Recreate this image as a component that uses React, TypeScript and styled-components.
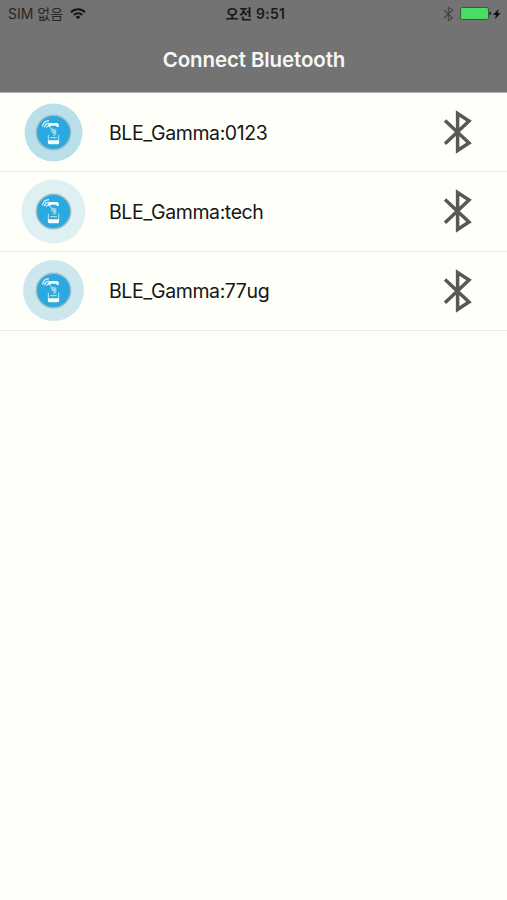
import React from "react";
import styled, { createGlobalStyle } from "styled-components";

const GlobalStyle = createGlobalStyle`
  * { box-sizing: border-box; }
  html, body, #root { margin: 0; padding: 0; }
  body { background: #fffffa; font-family: Inter, "Noto Sans CJK KR", sans-serif; overflow: hidden; }
  svg { display: block; flex: none; }
`;

const Screen = styled.main`
  width: 507px;
  height: 900px;
  background: #fffffa;
`;

const Header = styled.header`
  height: 93px;
  background: #737373;
  border-bottom: 1px solid #b0b0ae;
`;

const StatusBar = styled.div`
  height: 27px;
  display: grid;
  grid-template-columns: 1fr auto 1fr;
  align-items: center;
  padding: 0 6px 0 8px;
  color: #262626;
  font-size: 14px;
  line-height: 18px;
`;

const Carrier = styled.div`
  display: flex;
  align-items: center;
  gap: 7px;
  white-space: nowrap;
`;

const Time = styled.div`
  padding-left: 2px;
  font-weight: 600;
  color: #1a1a1a;
  letter-spacing: 0.3px;
  white-space: nowrap;
`;

const Indicators = styled.div`
  display: flex;
  align-items: center;
  justify-content: flex-end;
`;

const Battery = styled.div`
  display: flex;
  align-items: center;
  gap: 1px;
  margin-left: 6px;
`;

const Title = styled.h1`
  margin: 0;
  height: 64px;
  padding-left: 1px;
  display: flex;
  align-items: center;
  justify-content: center;
  color: #f7f7f7;
  font-size: 20.5px;
  font-weight: 600;
  letter-spacing: -0.12px;
`;

const DeviceList = styled.ul`
  list-style: none;
  margin: 0;
  padding: 0;
`;

const DeviceRow = styled.li`
  height: 79.33px;
  display: grid;
  grid-template-columns: 88px 1fr 30px;
  align-items: center;
  padding: 0 34px 0 21px;
  border-bottom: 1px solid #e9e9e5;
`;

const DeviceName = styled.span`
  padding-top: 1px;
  color: #161616;
  font-size: 19.5px;
  line-height: 24px;
  letter-spacing: -0.4px;
`;

const WifiIcon = () => (
  <svg width="16" height="12" viewBox="0 0 16 12" fill="none" stroke="#141414" strokeWidth="2">
    <path d="M1 4.2a10 10 0 0 1 14 0M3.8 7a6 6 0 0 1 8.4 0" />
    <path d="M5.7 8.9a3.4 3.4 0 0 1 4.6 0L8 11.3Z" fill="#141414" stroke="none" />
  </svg>
);

const BluetoothIcon = ({ width, height, stroke, color }: { width: number; height: number; stroke: number; color: string }) => (
  <svg width={width} height={height} viewBox="0 0 30 44" fill="none" stroke={color} strokeWidth={stroke} strokeMiterlimit="10">
    <path d="M2 10.5 26 33 14.6 40.5V3.5L26 11 2 33.7" />
  </svg>
);

const BatteryIcon = () => (
  <svg width="32" height="13" viewBox="0 0 32 13">
    <rect x=".5" y=".5" width="28" height="12" rx="1.8" fill="#4cdc64" stroke="#3d5541" />
    <path d="M29.5 4.8c2.2.2 2.2 3.2 0 3.4Z" fill="#181818" />
  </svg>
);

const ChargeIcon = () => (
  <svg width="8" height="12" viewBox="0 0 8 12">
    <path d="M5.8.8 0 6.9h3.1L1.8 11.2 7.8 5H4.7Z" fill="#101010" />
  </svg>
);

const DeviceBadge = ({ radius, halo }: { radius: number; halo: string }) => (
  <svg width="65" height="65" viewBox="0 0 65 65" fill="none">
    <circle cx="32.5" cy="32.5" r={radius} fill={halo} />
    <circle cx="32.5" cy="32.5" r="17.2" fill="#29a9df" stroke="#a4bdc4" strokeWidth="1.4" />
    <g stroke="#d8f4ff" strokeWidth="1.25">
      <path d="M21.5 26.7c.5-3.5 3-5.8 6.5-6M23.5 27.3c.5-2.5 2.1-3.9 4.5-4.1M25.5 27.6c.3-1.3 1.1-2 2.4-2.1" />
    </g>
    <path d="M27.2 27v-2.1c0-1.1.9-2 2-2h6.6c1.1 0 2 .9 2 2V27h-1.9l-.8-1.2h-5.4L29 27Z" fill="#f4fcff" />
    <path d="M29.1 26.5c.2 2 1.2 3 2.8 3.8m-1.7 1.4 1.5-2.4 3 .8v4.3l-2.6 1.2" stroke="#91d5ed" strokeWidth="1.3" />
    <circle cx="33" cy="32" r="2" fill="#a5d5dd" />
    <path d="M27.4 34.8v5.7M37.6 34.8v5.7M29.2 37.6h6.6" stroke="#a2ddec" strokeWidth="1.2" />
    <path d="M26.9 40.3h11.2v2.4c0 .8-.7 1.5-1.5 1.5h-8.2c-.8 0-1.5-.7-1.5-1.5Z" fill="#f7fdff" />
  </svg>
);

const devices = [
  { name: "BLE_Gamma:0123", radius: 29, halo: "#b9e0e8" },
  { name: "BLE_Gamma:tech", radius: 32, halo: "#def0f2" },
  { name: "BLE_Gamma:77ug", radius: 30.5, halo: "#cce8ee" },
];

export default function App() {
  return (
    <>
      <GlobalStyle />
      <Screen>
        <Header>
          <StatusBar>
            <Carrier>SIM 없음 <WifiIcon /></Carrier>
            <Time>오전 9:51</Time>
            <Indicators>
              <BluetoothIcon width={11} height={16} stroke={3} color="#444" />
              <Battery>
                <BatteryIcon />
                <ChargeIcon />
              </Battery>
            </Indicators>
          </StatusBar>
          <Title>Connect Bluetooth</Title>
        </Header>
        <DeviceList>
          {devices.map((device) => (
            <DeviceRow key={device.name}>
              <DeviceBadge radius={device.radius} halo={device.halo} />
              <DeviceName>{device.name}</DeviceName>
              <BluetoothIcon width={30} height={44} stroke={3.5} color="#585858" />
            </DeviceRow>
          ))}
        </DeviceList>
      </Screen>
    </>
  );
}
